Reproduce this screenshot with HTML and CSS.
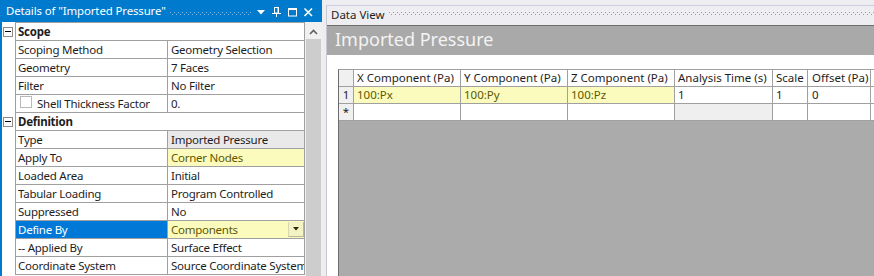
FILE: index.html
```html
<!DOCTYPE html>
<html>
<head>
<meta charset="utf-8">
<link rel="stylesheet" href="styles.css">
</head>
<body>
<div class="app">
  <div class="details">
    <div class="titlebar">
      <span class="title">Details of "Imported Pressure"</span>
      <svg class="tb-dots" height="3"><defs><pattern id="tbp" width="4" height="4" patternUnits="userSpaceOnUse"><rect x="0" y="0" width="1" height="1" fill="#7fbbe6"/><rect x="2" y="2" width="1" height="1" fill="#7fbbe6"/></pattern></defs><rect width="100%" height="100%" fill="url(#tbp)"/></svg>
      <svg class="tb-icons" width="64" height="22" viewBox="0 0 64 22">
        <polygon points="5,10 13,10 9,14.5" fill="#fff"/>
        <rect x="22.5" y="7.5" width="4" height="5.5" fill="none" stroke="#fff" stroke-width="1"/>
        <line x1="26" y1="7" x2="26" y2="13" stroke="#fff" stroke-width="1"/>
        <line x1="20" y1="13.5" x2="29" y2="13.5" stroke="#fff" stroke-width="1"/>
        <line x1="24.5" y1="13.5" x2="24.5" y2="17" stroke="#fff" stroke-width="1"/>
        <rect x="36.5" y="8.5" width="8" height="7.5" fill="none" stroke="#fff" stroke-width="1"/>
        <line x1="36" y1="9.5" x2="45" y2="9.5" stroke="#fff" stroke-width="1"/>
        <path d="M52.5 8.5 L60 16 M60 8.5 L52.5 16" stroke="#fff" stroke-width="1.6" fill="none"/>
      </svg>
    </div>
    <div class="details-body">
      <div class="grid">
        <div class="grid-top"></div>
        <div class="row"><div class="exp"><span class="minus"></span></div><div class="cell cat">Scope</div></div>
        <div class="row"><div class="exp"></div><div class="cell prop">Scoping Method</div><div class="cell val">Geometry Selection</div></div>
        <div class="row"><div class="exp"></div><div class="cell prop">Geometry</div><div class="cell val">7 Faces</div></div>
        <div class="row"><div class="exp"></div><div class="cell prop">Filter</div><div class="cell val">No Filter</div></div>
        <div class="row"><div class="exp"></div><div class="cell prop prop-cb"><span class="checkbox"></span><span>Shell Thickness Factor</span></div><div class="cell val">0.</div></div>
        <div class="row"><div class="exp"><span class="minus"></span></div><div class="cell cat">Definition</div></div>
        <div class="row"><div class="exp"></div><div class="cell prop">Type</div><div class="cell val val-ro">Imported Pressure</div></div>
        <div class="row"><div class="exp"></div><div class="cell prop">Apply To</div><div class="cell val val-req">Corner Nodes</div></div>
        <div class="row"><div class="exp"></div><div class="cell prop">Loaded Area</div><div class="cell val">Initial</div></div>
        <div class="row"><div class="exp"></div><div class="cell prop">Tabular Loading</div><div class="cell val">Program Controlled</div></div>
        <div class="row"><div class="exp"></div><div class="cell prop">Suppressed</div><div class="cell val">No</div></div>
        <div class="row"><div class="exp"></div><div class="cell prop prop-sel">Define By</div><div class="cell val val-req val-dd"><span>Components</span><span class="dd-btn"><svg width="6" height="4" viewBox="0 0 6 4"><polygon points="0,0 6,0 3,3.5" fill="#2a2a10"/></svg></span></div></div>
        <div class="row"><div class="exp"></div><div class="cell prop">-- Applied By</div><div class="cell val">Surface Effect</div></div>
        <div class="row"><div class="exp"></div><div class="cell prop">Coordinate System</div><div class="cell val">Source Coordinate System</div></div>
      </div>
      <div class="vscroll">
        <div class="vs-btn"><svg width="17" height="17" viewBox="0 0 17 17"><polyline points="5,12 8.5,8.5 12,12" fill="none" stroke="#606060" stroke-width="1.6"/></svg></div>
        <div class="vs-thumb"></div>
      </div>
    </div>
  </div>
  <div class="dataview">
    <div class="dv-head">
      <span class="dv-label">Data View</span>
      <svg class="dv-dots" height="3"><defs><pattern id="dvp" width="4" height="4" patternUnits="userSpaceOnUse"><rect x="0" y="0" width="1" height="1" fill="#9a9aa6"/><rect x="2" y="2" width="1" height="1" fill="#9a9aa6"/></pattern></defs><rect width="100%" height="100%" fill="url(#dvp)"/></svg>
    </div>
    <div class="dv-title">Imported Pressure</div>
    <div class="dv-body">
      <div class="dtable">
        <div class="drow">
          <div class="dc rh"></div>
          <div class="dc c-xyz">X Component (Pa)</div>
          <div class="dc c-xyz">Y Component (Pa)</div>
          <div class="dc c-xyz">Z Component (Pa)</div>
          <div class="dc c-time">Analysis Time (s)</div>
          <div class="dc c-scale">Scale</div>
          <div class="dc c-off">Offset (Pa)</div>
          <div class="dc c-fill"></div>
        </div>
        <div class="drow">
          <div class="dc rh">1</div>
          <div class="dc c-xyz req">100:Px</div>
          <div class="dc c-xyz req">100:Py</div>
          <div class="dc c-xyz req">100:Pz</div>
          <div class="dc c-time">1</div>
          <div class="dc c-scale">1</div>
          <div class="dc c-off">0</div>
          <div class="dc c-fill"></div>
        </div>
        <div class="drow">
          <div class="dc rh">*</div>
          <div class="dc c-xyz"></div>
          <div class="dc c-xyz"></div>
          <div class="dc c-xyz"></div>
          <div class="dc c-time ro"></div>
          <div class="dc c-scale"></div>
          <div class="dc c-off"></div>
          <div class="dc c-fill"></div>
        </div>
      </div>
    </div>
  </div>
</div>
</body>
</html>
```

FILE: styles.css
```css
html, body {
  margin: 0;
  padding: 0;
}
body {
  width: 874px;
  height: 276px;
  overflow: hidden;
  background: #eeeef2;
  font-family: "Noto Sans", "Open Sans", sans-serif;
  font-size: 11.5px;
  color: #1e1e1e;
}
.app {
  display: flex;
  height: 276px;
}

/* ---------- Details panel ---------- */
.details {
  width: 322px;
  flex: none;
  display: flex;
  flex-direction: column;
  background: #fff;
}
.titlebar {
  height: 22px;
  flex: none;
  background: #007acc;
  color: #fff;
  display: flex;
  align-items: center;
  padding-left: 6px;
}
.title {
  font-size: 11.4px;
  line-height: 22px;
  white-space: nowrap;
  letter-spacing: -0.1px;
}
.tb-dots {
  flex: 1;
  min-width: 0;
  margin-left: 4px;
  align-self: flex-start;
  margin-top: 12px;
}
.tb-icons {
  flex: none;
  margin-right: 6px;
}
.details-body {
  flex: 1;
  display: flex;
  border-left: 2px solid #007acc;
  min-height: 0;
}
.grid {
  width: 303px;
  flex: none;
  letter-spacing: -0.25px;
}
.grid-top {
  height: 1px;
  width: 290px;
  margin-left: 13px;
  background: #a0a0a0;
}
.row {
  display: flex;
  height: 18px;
}
.exp {
  width: 13px;
  flex: none;
}
.minus {
  display: block;
  box-sizing: border-box;
  width: 10px;
  height: 10px;
  margin: 4px 0 0 1px;
  border: 1px solid #8a8a8a;
  position: relative;
}
.minus::after {
  content: "";
  position: absolute;
  left: 1px;
  right: 1px;
  top: 3px;
  height: 1px;
  background: #000;
}
.cell {
  box-sizing: border-box;
  height: 18px;
  border-left: 1px solid #a0a0a0;
  border-bottom: 1px solid #a0a0a0;
  line-height: 17px;
  white-space: nowrap;
  overflow: hidden;
}
.cat {
  width: 290px;
  border-right: 1px solid #a0a0a0;
  font-weight: bold;
  padding-left: 2px;
}
.prop {
  width: 152px;
  padding-left: 2px;
}
.prop-cb {
  display: flex;
  align-items: flex-start;
}
.checkbox {
  box-sizing: border-box;
  width: 12px;
  height: 12px;
  margin: 1px 5px 0 2px;
  border: 1px solid #b9b9b9;
  background: #fff;
  flex: none;
}
.prop-sel {
  background: #0078d7;
  color: #fff;
}
.val {
  width: 138px;
  border-right: 1px solid #a0a0a0;
  padding-left: 3px;
}
.val-ro {
  background: #e9e9e9;
}
.val-req {
  background: #fbfbbe;
  color: #5e5800;
}
.val-dd {
  display: flex;
  justify-content: space-between;
  padding-right: 0;
}
.dd-btn {
  box-sizing: border-box;
  width: 16px;
  height: 15px;
  margin-top: 1px;
  border-left: 1px solid #d6d6b0;
  border-bottom: 1px solid #b8b89a;
  border-right: 1px solid #b8b89a;
  background: #f3f3c4;
  display: flex;
  align-items: center;
  justify-content: center;
}
.vscroll {
  width: 17px;
  flex: none;
  display: flex;
  flex-direction: column;
  background: #f0f0f0;
}
.vs-btn {
  height: 17px;
  flex: none;
}
.vs-btn svg {
  display: block;
}
.vs-thumb {
  flex: 1;
  margin: 0 1px 0 1px;
  background: #cdcdcd;
}

/* ---------- Data view ---------- */
.dataview {
  flex: 1;
  min-width: 0;
  margin-left: 4px;
  margin-top: 5px;
  border-left: 1px solid #c8c8d0;
  border-top: 1px solid #cfcce0;
  display: flex;
  flex-direction: column;
  background: #fff;
}
.dv-head {
  height: 19px;
  flex: none;
  background: #eeeef2;
  display: flex;
  align-items: flex-start;
  padding-left: 4px;
}
.dv-label {
  line-height: 18px;
  white-space: nowrap;
}
.dv-dots {
  flex: 1;
  min-width: 0;
  margin-left: 4px;
  margin-top: 6px;
}
.dv-title {
  height: 29px;
  flex: none;
  border-top: 1px solid #6e6e6e;
  background: #a9a9a9;
  color: #f3f3f3;
  font-size: 18px;
  line-height: 26px;
  padding-left: 8px;
  white-space: nowrap;
}
.dv-body {
  flex: 1;
  display: flex;
  flex-direction: column;
  padding: 14px 0 0 11px;
  background: #fff;
  min-height: 0;
}
.dtable {
  flex: 1;
  background: #ababab;
  border-left: 1px solid #6b6b6b;
  border-top: 1px solid #a0a0a0;
}
.drow {
  display: flex;
  box-sizing: border-box;
  height: 17px;
  background: #fff;
  border-bottom: 1px solid #a0a0a0;
}
.dc {
  box-sizing: border-box;
  flex: none;
  border-right: 1px solid #a0a0a0;
  line-height: 16px;
  padding-left: 3px;
  white-space: nowrap;
  overflow: hidden;
}
.rh {
  width: 15px;
  padding-left: 0;
  text-align: center;
  background: #f0f0f0;
}
.c-xyz { width: 107px; }
.c-time { width: 98px; }
.c-scale { width: 35px; }
.c-off { width: 63px; padding-left: 4px; }
.c-fill {
  flex: 1;
  border-right: 0;
}
.req {
  background: #fbfbbe;
  color: #5e5800;
}
.ro {
  background: #efefef;
}
```
